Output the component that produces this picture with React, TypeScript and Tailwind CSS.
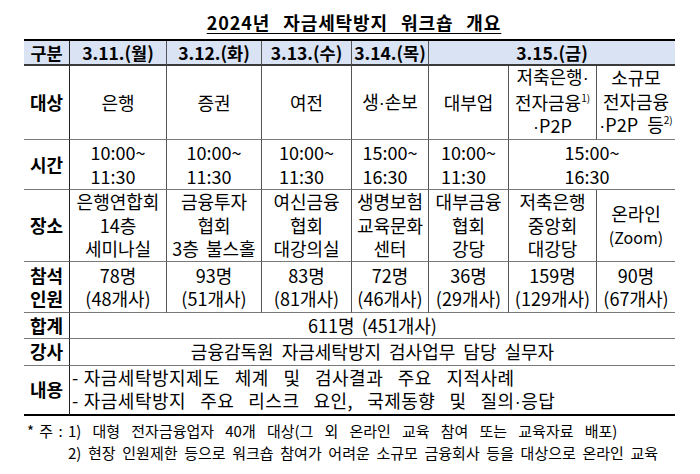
import React from "react";

const F = { fontFamily: '"Noto Sans CJK KR", "Noto Sans", sans-serif' };

function Cell({
  children,
  className = "",
}: {
  children?: React.ReactNode;
  className?: string;
}) {
  return (
    <div className={"flex flex-col items-center justify-center text-center " + className}>
      {children}
    </div>
  );
}

function Dot() {
  return <span style={{ fontFamily: '"Liberation Sans", sans-serif' }}>·</span>;
}

const HB = "bg-[#dae3f3] border-b-2 border-b-[#3a3a3a] font-bold text-[17.5px]";
const RB = "border-b border-b-[#7a7a7a]";
const LB = "border-b-2 border-b-black";
const VL = "border-r border-r-[#222]";
const VC = "border-r border-r-[#555]";

export default function App() {
  return (
    <div className="w-[700px] h-[474px] bg-white text-black overflow-hidden" style={F}>
      <div className="pt-[10px] flex justify-center">
        <div className="text-[18px] leading-[24px] font-bold underline underline-offset-[3px] [word-spacing:8px] tracking-[0.9px] pl-[8px]">
          2024년 자금세탁방지 워크숍 개요
        </div>
      </div>
      <div className="mt-[5px] ml-[24px] w-[651px] border-t-2 border-t-black grid grid-cols-[46px_97px_95px_90px_77px_80px_88px_78px] grid-rows-[25px_74px_50px_72px_51px_26px_27px_50px] text-[18px] leading-[23.5px]">
        {/* header */}
        <Cell className={HB + " " + VL}>구분</Cell>
        <Cell className={HB + " " + VC}>3.11.(월)</Cell>
        <Cell className={HB + " " + VC}>3.12.(화)</Cell>
        <Cell className={HB + " " + VC}>3.13.(수)</Cell>
        <Cell className={HB + " " + VC}>3.14.(목)</Cell>
        <Cell className={HB + " col-span-3"}>3.15.(금)</Cell>

        {/* 대상 */}
        <Cell className={RB + " " + VL + " font-bold"}>대상</Cell>
        <Cell className={RB + " " + VC}>은행</Cell>
        <Cell className={RB + " " + VC}>증권</Cell>
        <Cell className={RB + " " + VC}>여전</Cell>
        <Cell className={RB + " " + VC}>
          <div>
            생<Dot />손보
          </div>
        </Cell>
        <Cell className={RB + " " + VC}>대부업</Cell>
        <Cell className={RB + " " + VC}>
          <div>
            저축은행<Dot />
          </div>
          <div className="whitespace-nowrap">
            전자금융<sup className="text-[10px] top-[-8px]">1)</sup>
          </div>
          <div>
            <Dot />P2P
          </div>
        </Cell>
        <Cell className={RB}>
          <div>소규모</div>
          <div>전자금융</div>
          <div className="whitespace-nowrap [word-spacing:5px]">
            <Dot />P2P 등<sup className="text-[10px] top-[-8px] [word-spacing:0px]">2)</sup>
          </div>
        </Cell>

        {/* 시간 */}
        <Cell className={RB + " " + VL + " font-bold"}>시간</Cell>
        {[
          ["10:00~", "11:30"],
          ["10:00~", "11:30"],
          ["10:00~", "11:30"],
          ["15:00~", "16:30"],
          ["10:00~", "11:30"],
        ].map((t, i) => (
          <Cell key={i} className={RB + " " + VC}>
            <div className="text-left">
              <div>{t[0]}</div>
              <div>{t[1]}</div>
            </div>
          </Cell>
        ))}
        <Cell className={RB + " col-span-2"}>
          <div className="text-left">
            <div>15:00~</div>
            <div>16:30</div>
          </div>
        </Cell>

        {/* 장소 */}
        <Cell className={RB + " " + VL + " font-bold"}>장소</Cell>
        <Cell className={RB + " " + VC}>
          <div>은행연합회</div>
          <div>14층</div>
          <div>세미나실</div>
        </Cell>
        <Cell className={RB + " " + VC}>
          <div>금융투자</div>
          <div>협회</div>
          <div className="whitespace-nowrap [word-spacing:3px]">3층 불스홀</div>
        </Cell>
        <Cell className={RB + " " + VC}>
          <div>여신금융</div>
          <div>협회</div>
          <div>대강의실</div>
        </Cell>
        <Cell className={RB + " " + VC}>
          <div>생명보험</div>
          <div>교육문화</div>
          <div>센터</div>
        </Cell>
        <Cell className={RB + " " + VC}>
          <div>대부금융</div>
          <div>협회</div>
          <div>강당</div>
        </Cell>
        <Cell className={RB + " " + VC}>
          <div>저축은행</div>
          <div>중앙회</div>
          <div>대강당</div>
        </Cell>
        <Cell className={RB}>
          <div>온라인</div>
          <div className="text-[16px]">(Zoom)</div>
        </Cell>

        {/* 참석인원 */}
        <Cell className={RB + " " + VL + " font-bold"}>
          <div>참석</div>
          <div>인원</div>
        </Cell>
        {[
          ["78명", "(48개사)"],
          ["93명", "(51개사)"],
          ["83명", "(81개사)"],
          ["72명", "(46개사)"],
          ["36명", "(29개사)"],
          ["159명", "(129개사)"],
          ["90명", "(67개사)"],
        ].map((t, i) => (
          <Cell key={i} className={RB + (i < 6 ? " " + VC : "")}>
            <div>{t[0]}</div>
            <div className="whitespace-nowrap">{t[1]}</div>
          </Cell>
        ))}

        {/* 합계 */}
        <Cell className={RB + " " + VL + " font-bold"}>합계</Cell>
        <Cell className={RB + " col-span-7 [word-spacing:3px]"}>611명 (451개사)</Cell>

        {/* 강사 */}
        <Cell className={RB + " " + VL + " font-bold"}>강사</Cell>
        <Cell className={RB + " col-span-7 [word-spacing:4px]"}>
          금융감독원 자금세탁방지 검사업무 담당 실무자
        </Cell>

        {/* 내용 */}
        <Cell className={LB + " " + VL + " font-bold"}>내용</Cell>
        <div className={LB + " col-span-7 flex flex-col justify-center pl-[2px] tracking-[0.5px]"}>
          <div className="whitespace-nowrap [word-spacing:10px]">
            <span className="[word-spacing:0px] mr-[5px]">-</span>자금세탁방지제도 체계 및 검사결과 주요 지적사례
          </div>
          <div className="whitespace-nowrap [word-spacing:9.5px]">
            <span className="[word-spacing:0px] mr-[5px]">-</span>자금세탁방지 주요 리스크 요인, 국제동향 및 질의<Dot />응답
          </div>
        </div>
      </div>

      {/* footnotes */}
      <div className="mt-[4px] ml-[27px] flex text-[15px] leading-[22px] whitespace-nowrap">
        <div className="w-[41px] [word-spacing:2px]">* 주 :</div>
        <div>
          <div className="[word-spacing:7.8px]">1) 대형 전자금융업자 40개 대상(그 외 온라인 교육 참여 또는 교육자료 배포)</div>
          <div className="[word-spacing:3.3px]">2) 현장 인원제한 등으로 워크숍 참여가 어려운 소규모 금융회사 등을 대상으로 온라인 교육</div>
        </div>
      </div>
    </div>
  );
}
